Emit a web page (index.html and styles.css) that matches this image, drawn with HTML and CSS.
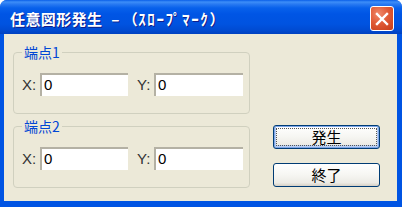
FILE: index.html
```html
<!DOCTYPE html>
<html lang="ja">
<head>
<meta charset="utf-8">
<title>任意図形発生</title>
<link rel="stylesheet" href="styles.css">
</head>
<body>
<div class="window">
  <div class="titlebar">
    <span class="title">任意図形発生 <span class="dash">–</span>（<span class="kana">ｽﾛｰﾌﾟﾏｰｸ</span>）</span>
    <button class="close" aria-label="閉じる">
      <svg width="14" height="14" viewBox="0 0 14 14"><path d="M2 2 L12 12 M12 2 L2 12" stroke="#fff" stroke-width="2.4" stroke-linecap="square"/></svg>
    </button>
  </div>
  <div class="content">
    <div class="groups">
      <fieldset class="group">
        <legend>端点1</legend>
        <div class="row">
          <label class="lbl">X:</label><input class="field f1" type="text" value="0">
          <label class="lbl lbl-y">Y:</label><input class="field f2" type="text" value="0">
        </div>
      </fieldset>
      <fieldset class="group group2">
        <legend>端点2</legend>
        <div class="row">
          <label class="lbl">X:</label><input class="field f1" type="text" value="0">
          <label class="lbl lbl-y">Y:</label><input class="field f2" type="text" value="0">
        </div>
      </fieldset>
    </div>
    <div class="buttons">
      <button class="btn default"><span class="focus">発生</span></button>
      <button class="btn">終了</button>
    </div>
  </div>
</div>
</body>
</html>
```
FILE: styles.css
```css
* { box-sizing: border-box; }
html, body { margin: 0; padding: 0; background: #ffffff; }
body { width: 402px; height: 207px; overflow: hidden; }

.window {
  width: 402px;
  height: 207px;
  display: flex;
  flex-direction: column;
  border-radius: 7px 7px 0 0;
  overflow: hidden;
  background: #0054E3;
}

.titlebar {
  height: 34px;
  flex: none;
  display: flex;
  align-items: center;
  padding: 3px 8px 0 10px;
  background: linear-gradient(to bottom,
    #0A5FE8 0px, #3D8EF8 2px, #2A7BF2 4px, #0861EB 8px,
    #0055E5 14px, #0053E0 24px, #004BD2 30px, #0041C0 34px);
}

.title {
  flex: 1;
  color: #ffffff;
  font-family: "Noto Sans CJK JP", sans-serif;
  font-weight: 700;
  font-size: 15px;
  line-height: 18px;
  letter-spacing: 0.4px;
  white-space: nowrap;
  text-shadow: 1px 1px 0 #0F1E8A;
}
.dash { margin: 0 3px 0 5px; }
.kana { letter-spacing: 1.6px; }

.close {
  width: 24px;
  height: 25px;
  margin: 0;
  padding: 0;
  border: 1px solid #ffffff;
  border-radius: 3px;
  background: radial-gradient(circle at 35% 30%, #F08A6C 0%, #E05A36 45%, #C73D18 100%);
  display: flex;
  align-items: center;
  justify-content: center;
}

.content {
  flex: 1;
  display: flex;
  background: #ECE9D8;
  margin: 0 5px 6px 4px;
  padding: 12px 0 0 9px;
  gap: 23px;
}

.groups {
  display: flex;
  flex-direction: column;
  gap: 6px;
}

.group {
  width: 237px;
  margin: 0;
  padding: 15px 6px 17px 8px;
  border: 1px solid #D0D0BF;
  border-radius: 4px;
}

.group legend {
  padding: 0 2px;
  color: #0046D5;
  font-family: "Noto Sans CJK JP", sans-serif;
  font-size: 14px;
  line-height: 12px;
  height: 12px;
}

.row {
  display: flex;
  align-items: center;
}

.lbl {
  width: 18px;
  font-family: "Liberation Sans", sans-serif;
  font-size: 15px;
  color: #333333;
  line-height: 16px;
}
.lbl-y { width: 17px; margin-left: 9px; }

.field {
  height: 23px;
  margin: 0;
  padding: 0 0 3px 2px;
  border: none;
  border-top: 2px solid #B4B1A4;
  border-left: 2px solid #B4B1A4;
  background: #ffffff;
  font-family: "Liberation Sans", sans-serif;
  font-size: 15px;
  color: #000000;
  outline: none;
}
.f1 { width: 88px; }
.f2 { width: 89px; }

.buttons {
  display: flex;
  flex-direction: column;
  padding-top: 79px;
  gap: 14px;
}

.btn {
  width: 107px;
  height: 24px;
  margin: 0;
  padding: 0;
  border: 1px solid #003C74;
  border-radius: 3px;
  background: linear-gradient(to bottom, #FFFFFF 0%, #F6F6F2 50%, #ECEBE5 85%, #D6D0C5 100%);
  font-family: "Noto Sans CJK JP", sans-serif;
  font-size: 15px;
  line-height: 18px;
  color: #000000;
  display: flex;
  align-items: center;
  justify-content: center;
}
.btn.default {
  box-shadow: inset 0 0 0 1px #7EA6E8, inset 0 -1px 0 2px #B9CFF2;
  padding: 2px;
}
.focus {
  flex: 1;
  align-self: stretch;
  display: flex;
  align-items: center;
  justify-content: center;
  outline: 1px dotted #555555;
  outline-offset: -1px;
}
```
